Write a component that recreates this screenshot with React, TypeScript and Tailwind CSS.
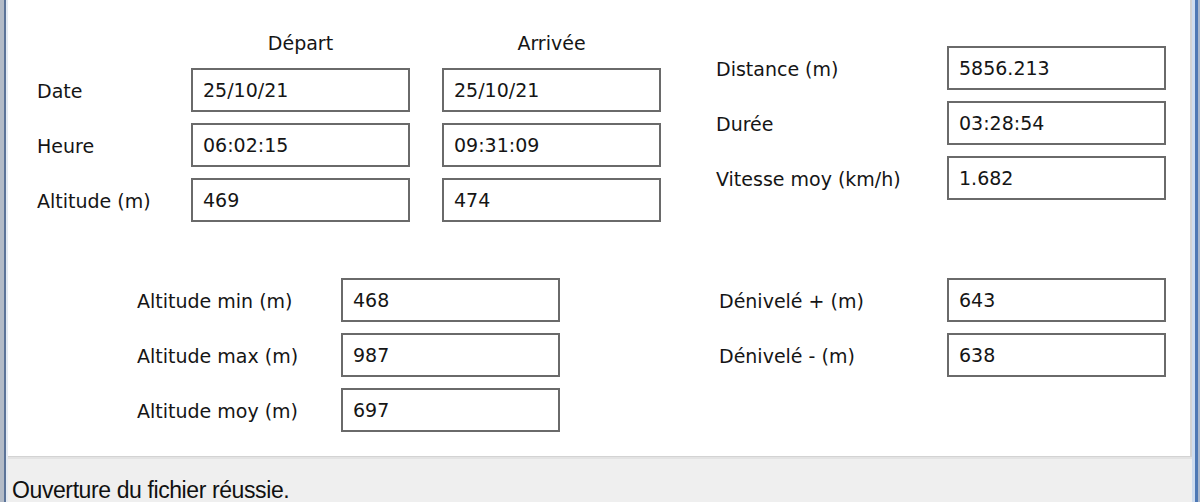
import React from "react";

const Box = ({ v }: { v: string }) => (
  <div className="h-[44px] w-[219px] border-2 border-[#6a6a6a] bg-white flex items-center pl-[10px] text-[19px] text-[#151515]">
    {v}
  </div>
);

const Label = ({ t }: { t: string }) => (
  <div className="h-[44px] flex items-center pt-[3px] text-[19px] text-[#151515] whitespace-nowrap">{t}</div>
);

export default function App() {
  return (
    <div className="w-[1200px] h-[502px] overflow-hidden flex bg-[#efefef] font-['DejaVu_Sans',sans-serif]">
      {/* left frame */}
      <div className="flex h-full">
        <div className="w-[4px] bg-[#b3bbc7]" />
        <div className="w-[2px] bg-[#5b7398]" />
        <div className="w-[2px] bg-[#e4eaf2]" />
      </div>

      <div className="flex-1 flex flex-col">
        {/* main panel */}
        <div className="h-[462px] bg-white border-b border-r-2 border-[#d3d3d3] flex flex-col pt-[30px] pl-[29px]">
          <div className="flex">
            <div className="grid grid-cols-[122px_219px_219px] gap-x-[32px] gap-y-[11px]">
              <div className="h-[27px]" />
              <div className="h-[27px] flex items-center justify-center text-[19px] text-[#151515]">Départ</div>
              <div className="h-[27px] flex items-center justify-center text-[19px] text-[#151515]">Arrivée</div>

              <Label t="Date" />
              <Box v="25/10/21" />
              <Box v="25/10/21" />

              <Label t="Heure" />
              <Box v="06:02:15" />
              <Box v="09:31:09" />

              <Label t="Altitude (m)" />
              <Box v="469" />
              <Box v="474" />
            </div>

            <div className="ml-[55px] mt-[16px] grid grid-cols-[231px_219px] gap-y-[11px] content-start">
              <Label t="Distance (m)" />
              <Box v="5856.213" />
              <Label t="Durée" />
              <Box v="03:28:54" />
              <Label t="Vitesse moy (km/h)" />
              <Box v="1.682" />
            </div>
          </div>

          <div className="flex mt-[56px]">
            <div className="ml-[100px] grid grid-cols-[204px_219px] gap-y-[11px] content-start">
              <Label t="Altitude min (m)" />
              <Box v="468" />
              <Label t="Altitude max (m)" />
              <Box v="987" />
              <Label t="Altitude moy (m)" />
              <Box v="697" />
            </div>
            <div className="ml-[159px] grid grid-cols-[228px_219px] gap-y-[11px] content-start">
              <Label t="Dénivelé + (m)" />
              <Box v="643" />
              <Label t="Dénivelé - (m)" />
              <Box v="638" />
            </div>
          </div>
        </div>

        {/* status bar */}
        <div className="flex-1 border-t-2 border-[#e3e3e3] bg-[#efefef] pl-[4px] pt-[20px]">
          <div className="text-[23px] leading-[23px] tracking-[-0.4px] text-[#111] font-['Liberation_Sans',sans-serif] whitespace-nowrap">
            Ouverture du fichier réussie.
          </div>
        </div>
      </div>

      {/* right frame */}
      <div className="flex h-full">
        <div className="w-[3px] bg-[#cddcef]" />
        <div className="w-[3px] bg-[#4d78b5]" />
        <div className="w-[2px] bg-[#aab8cc]" />
      </div>
    </div>
  );
}
